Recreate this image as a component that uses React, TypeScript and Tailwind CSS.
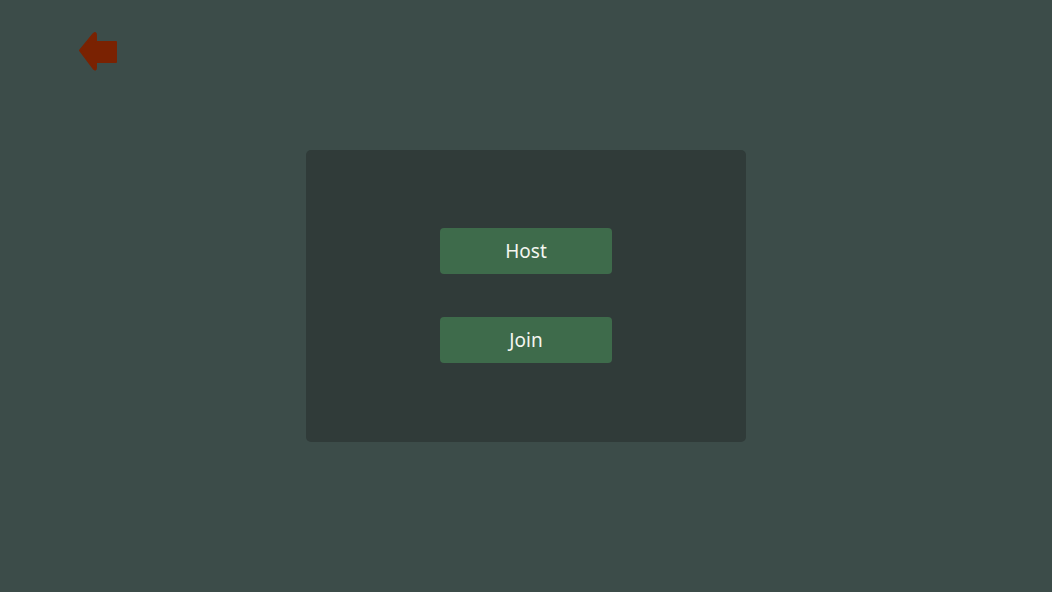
import React from "react";

export default function App() {
  return (
    <div className="relative flex h-[592px] w-full items-center justify-center bg-[#3c4c49]" style={{ fontFamily: '"Noto Sans", "DejaVu Sans", sans-serif' }}>
      <button className="absolute left-[76px] top-[30px] h-[44px] w-[44px]" aria-label="Back">
        <svg viewBox="0 0 44 44" width="44" height="44">
          <path
            d="M4 20.5 L17.5 4 Q20 1.8 20 5 L20 12 L40 12 L40 32 L20 32 L20 37.5 Q20 41 17.5 38.5 Z"
            fill="#7a2202"
            stroke="#7a2202"
            strokeWidth="2"
            strokeLinejoin="round"
          />
        </svg>
      </button>
      <div className="flex h-[292px] w-[440px] flex-col items-center gap-[43px] rounded-[5px] bg-[#303b39] pt-[78px]">
        <button className="h-[46px] w-[172px] rounded-[4px] bg-[#3e6b4b] text-[19px] text-[#f4f6f0]">Host</button>
        <button className="h-[46px] w-[172px] rounded-[4px] bg-[#3e6b4b] text-[19px] text-[#f4f6f0]">Join</button>
      </div>
    </div>
  );
}
